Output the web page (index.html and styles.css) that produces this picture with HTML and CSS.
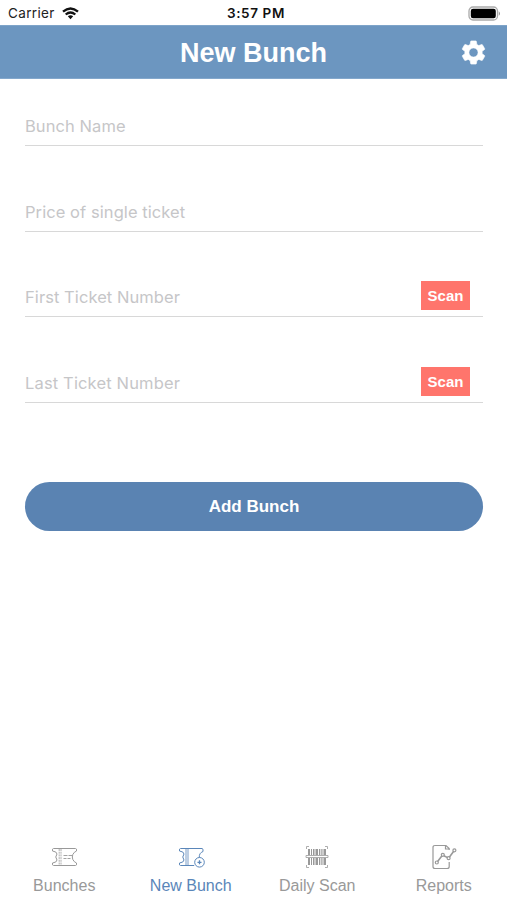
FILE: index.html
```html
<!DOCTYPE html>
<html lang="en">
<head>
<meta charset="utf-8">
<title>New Bunch</title>
<link rel="stylesheet" href="styles.css">
</head>
<body>
<div class="app">
  <div class="status">
    <div class="status-left"><span class="carrier">Carrier</span>
      <svg class="wifi" width="17" height="13" viewBox="0 0 17 13" fill="none" stroke="#111" stroke-width="2.3"><path d="M1 4.7Q8.5-1.8 16 4.7M3.7 7.5Q8.5 3.4 13.3 7.5"/><path d="M5.8 9.3Q8.5 7.2 11.2 9.3L8.5 12.3Z" fill="#111" stroke="none"/></svg>
    </div>
    <span class="time">3:57 PM</span>
    <svg class="battery" width="33" height="15" viewBox="0 0 33 15"><rect x="1" y="1" width="28.5" height="13" rx="4" fill="#fff" stroke="#aaa" stroke-width="1.3"/><rect x="2.8" y="2.8" width="25" height="9.4" rx="2.2" fill="#000"/><path d="M30.8 5.2Q33 7.5 30.8 9.8Z" fill="#888"/></svg>
  </div>
  <header class="header">
    <h1 class="title">New Bunch</h1>
    <svg class="gear" width="29" height="29" viewBox="0 0 24 24" fill="#fff" stroke="#fff" stroke-width=".5" stroke-linejoin="round"><path d="M19.14 12.94c.04-.3.06-.61.06-.94s-.02-.64-.07-.94l2.03-1.58a.49.49 0 0 0 .12-.61l-1.92-3.32a.49.49 0 0 0-.59-.22l-2.39.96a7 7 0 0 0-1.62-.94l-.36-2.54a.48.48 0 0 0-.48-.41h-3.84a.47.47 0 0 0-.47.41l-.36 2.54c-.59.24-1.13.57-1.62.94l-2.39-.96a.48.48 0 0 0-.59.22L2.74 8.87a.47.47 0 0 0 .12.61l2.03 1.58a6 6 0 0 0 0 1.88l-2.03 1.58a.49.49 0 0 0-.12.61l1.92 3.32c.12.22.37.29.59.22l2.39-.96c.5.38 1.03.7 1.62.94l.36 2.54c.05.24.24.41.48.41h3.84c.24 0 .44-.17.47-.41l.36-2.54a7 7 0 0 0 1.62-.94l2.39.96c.22.08.47 0 .59-.22l1.92-3.32a.47.47 0 0 0-.12-.61zM12 15.8a3.8 3.8 0 1 1 0-7.6 3.8 3.8 0 0 1 0 7.6z"/></svg>
  </header>
  <main class="form">
    <div class="field"><span class="hint">Bunch Name</span></div>
    <div class="field"><span class="hint">Price of single ticket</span></div>
    <div class="field"><span class="hint">First Ticket Number</span><button class="scan">Scan</button></div>
    <div class="field"><span class="hint last">Last Ticket Number</span><button class="scan">Scan</button></div>
    <button class="add">Add Bunch</button>
  </main>
  <nav class="tabs">
    <div class="tab">
      <svg width="28" height="28" viewBox="0 0 28 28" fill="none" stroke="currentColor" stroke-linejoin="round"><path d="M3.5 5.5H25.5Q27 5.5 26.5 8Q24 9 22.8 11.5Q21.8 14 22.8 16.5Q24 19 26.5 20Q27 22.5 25.5 22.5H3.5Q2 22.5 2.5 20Q6.8 19.5 7 17Q4.5 14 7 11Q6.8 8.5 2.5 8Q2 5.5 3.5 5.5Z"/><path d="M9.2 6V22M11 6V22" stroke-dasharray="2 .7" stroke-width=".8"/><path d="M13.5 12.5H17.5M18.5 12.5H22M13.5 15.5H16.5M17.5 15.5H20.5" stroke-width=".9"/></svg>
      <span>Bunches</span>
    </div>
    <div class="tab active">
      <svg width="28" height="28" viewBox="0 0 28 28" fill="none" stroke="currentColor" stroke-linejoin="round"><path d="M17.2 22.5H3.5Q2 22.5 2.5 20Q6.8 19.5 7 17Q4.5 14 7 11Q6.8 8.5 2.5 8Q2 5.5 3.5 5.5H25Q26.5 5.5 26 8.5Q22 10 22.3 14.5"/><path d="M9 6V22M11 6V22" stroke-width=".8"/><circle cx="22.5" cy="19.3" r="4.8"/><path d="M22.5 17.3V21.3M20.5 19.3H24.5" stroke-width="1.3"/></svg>
      <span>New Bunch</span>
    </div>
    <div class="tab">
      <svg width="28" height="28" viewBox="0 0 28 28" fill="none" stroke="currentColor"><path d="M3.5 6V3.5H6M22 3.5H24.5V6M3.5 22V24.5H6M22 24.5H24.5V22M3 12.5H25V14.5H3Z" stroke-width=".8"/><path d="M6 6V12M14 6V12M22 6V12M6 15V22M14 15V22M22 15V22" stroke-width="2"/><path d="M8.5 6V12M10.5 6V12M12 6V12M16.5 6V12M18.2 6V12M20 6V12M8.5 15V22M10.5 15V22M12 15V22M16.5 15V22M18.2 15V22M20 15V22" stroke-width="1"/></svg>
      <span>Daily Scan</span>
    </div>
    <div class="tab">
      <svg width="28" height="28" viewBox="0 0 28 28" fill="none" stroke="currentColor" stroke-width="1.2"><path d="M19.2 7V5.5L16 2.5H5Q3 2.5 3 4.5V23.5Q3 25.5 5 25.5H17.2Q19.2 25.5 19.2 23.5V19M15.5 2.5V6H19.2"/><path d="M7.6 18.5L12 12.8M13.8 12.7L17.6 14.6M19.3 14.2L23.7 8.3" stroke-width="1.6"/><circle cx="6.8" cy="19.5" r="1.5"/><circle cx="12.8" cy="11.8" r="1.5"/><circle cx="18.6" cy="15.2" r="1.5"/><circle cx="24.4" cy="7.3" r="1.5"/></svg>
      <span>Reports</span>
    </div>
  </nav>
</div>
</body>
</html>
```
FILE: styles.css
```css
* { box-sizing: border-box; }
body { margin: 0; background: #fff; font-family: "Liberation Sans", Arial, sans-serif; }
.app { width: 507px; height: 900px; display: flex; flex-direction: column; }
.status { height: 25px; flex: none; display: grid; grid-template-columns: 1fr auto 1fr; align-items: center; padding: 2px 6px 0 8px; font-family: Inter, sans-serif; color: #222; font-size: 13.5px; line-height: 23px; }
.status-left { display: flex; align-items: center; gap: 7px; }
.carrier { letter-spacing: .35px; }
.time { font-weight: 600; color: #111; letter-spacing: .6px; padding-left: 3px; }
.battery { justify-self: end; }
.header { height: 54px; flex: none; background: #6c96c0; border-top: 1px solid #7ea4c9; border-bottom: 1px solid #84a8cc; display: grid; grid-template-columns: 1fr auto 1fr; align-items: center; padding: 1px 19px 0; }
.title { grid-column: 2; margin: 0; padding-top: 1px; font-size: 27px; line-height: 32px; font-weight: 700; color: #fff; }
.gear { justify-self: end; }
.form { flex: 1; padding: 0 24px 0 25px; display: flex; flex-direction: column; }
.field { height: 85.5px; flex: none; display: flex; justify-content: space-between; align-items: flex-end; border-bottom: 1px solid #d8d8d8; padding-bottom: 6px; }
.field:first-child { height: 67px; }
.hint { margin-bottom: 1px; font-family: Inter, sans-serif; font-size: 16.5px; line-height: 24px; letter-spacing: .07px; color: #c6c6c8; }
.last { letter-spacing: .15px; }
.scan { width: 49px; height: 29px; margin-right: 13px; padding: 0; border: 0; background: #ff756c; color: #fff; font: 700 15px/29px "Liberation Sans", Arial, sans-serif; }
.add { flex: none; height: 49px; margin-top: 79px; border: 0; border-radius: 25px; background: #5a83b2; color: #fff; font: 700 17px/49px "Liberation Sans", Arial, sans-serif; padding: 0; }
.tabs { height: 57px; flex: none; display: grid; grid-template-columns: repeat(4, 1fr); padding-left: 1px; }
.tab { display: flex; flex-direction: column; align-items: center; color: #999; font-size: 16px; line-height: 29px; }
.tab svg { display: block; }
.active { color: #5a86b9; }
```
